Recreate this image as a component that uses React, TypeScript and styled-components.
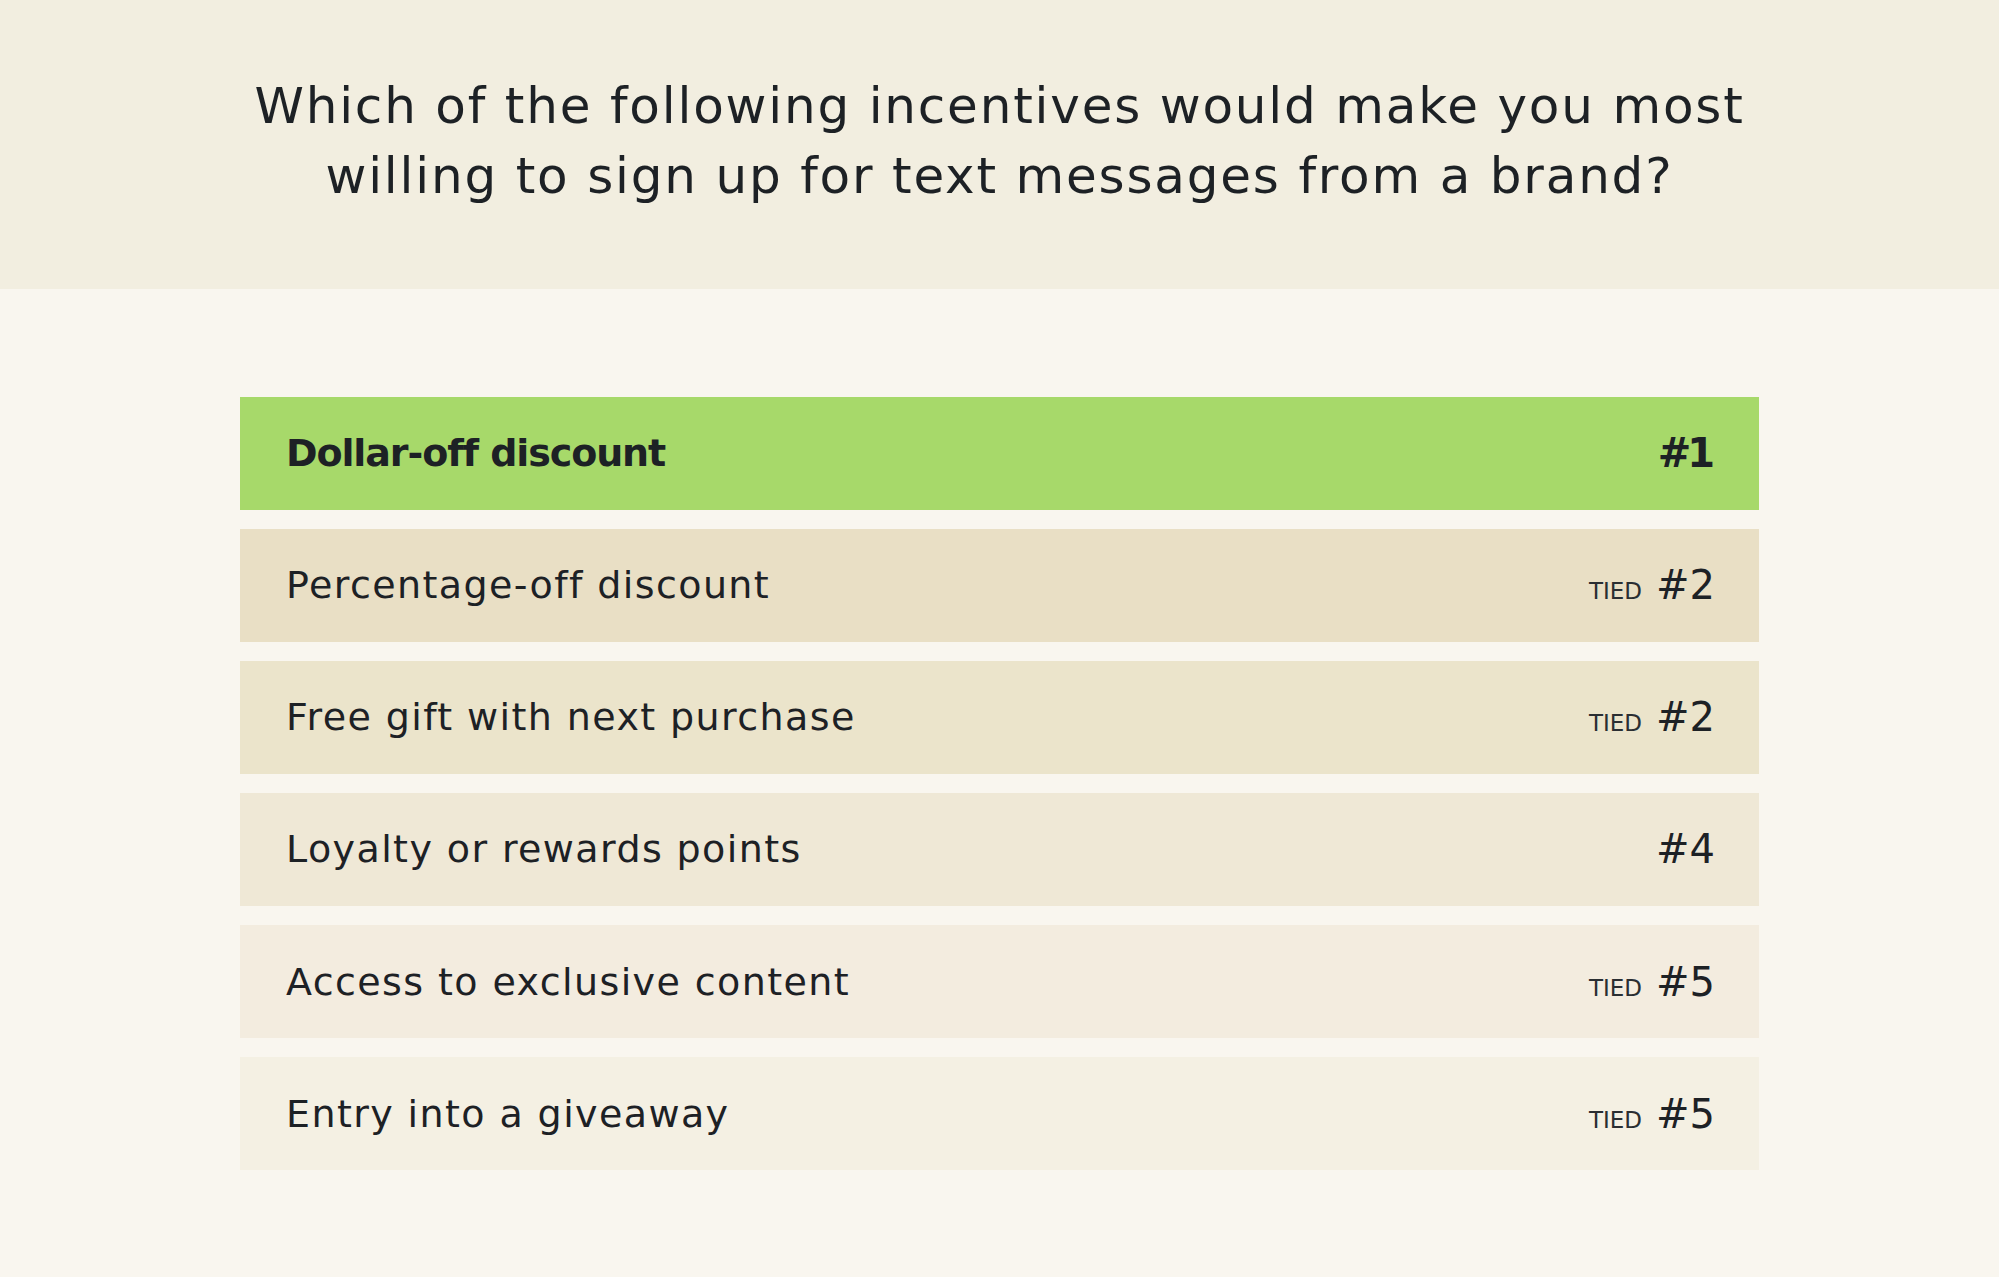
import React from "react";
import styled, { createGlobalStyle } from "styled-components";

const GlobalStyle = createGlobalStyle`
  html, body {
    margin: 0;
    padding: 0;
    background: #f9f6ef;
  }
  body {
    font-family: "DejaVu Sans", "Liberation Sans", sans-serif;
    color: #1d2125;
  }
`;

const Page = styled.main`
  min-height: 1277px;
  background: #f9f6ef;
  display: flex;
  flex-direction: column;
`;

const Header = styled.header`
  height: 289px;
  background: #f2eee0;
  display: flex;
  align-items: center;
  justify-content: center;
  box-sizing: border-box;
  padding-bottom: 8px;
`;

const Question = styled.h1`
  margin: 0;
  font-family: "DejaVu Sans", sans-serif;
  font-weight: 400;
  font-size: 50px;
  line-height: 70px;
  letter-spacing: 1.8px;
  text-align: center;
  color: #1d2125;
  max-width: 1600px;
`;

const List = styled.ol`
  list-style: none;
  margin: 107.5px auto 0;
  padding: 0;
  width: 1519px;
  display: flex;
  flex-direction: column;
  gap: 18.8px;
`;

const Row = styled.li<{ $bg: string }>`
  height: 113.3px;
  background: ${(p) => p.$bg};
  display: flex;
  align-items: center;
  justify-content: space-between;
  padding: 0 44px 0 46px;
  box-sizing: border-box;
`;

const Label = styled.span<{ $bold?: boolean }>`
  font-family: "DejaVu Sans", sans-serif;
  font-size: 38px;
  font-weight: ${(p) => (p.$bold ? 700 : 400)};
  letter-spacing: ${(p) => (p.$bold ? "-1.1px" : "1.4px")};
  color: #1d2125;
`;

const Rank = styled.span`
  display: flex;
  align-items: baseline;
  gap: 14px;
`;

const Tied = styled.span`
  font-family: "DejaVu Sans", sans-serif;
  font-size: 23px;
  color: #2a2e32;
`;

const Number = styled.span<{ $bold?: boolean }>`
  font-family: "DejaVu Sans", sans-serif;
  font-size: 40px;
  font-weight: ${(p) => (p.$bold ? 700 : 400)};
  letter-spacing: ${(p) => (p.$bold ? "-4px" : "0px")};
  margin-right: ${(p) => (p.$bold ? "4px" : "0")};
  color: #1d2125;
`;

const items = [
  { label: "Dollar-off discount", rank: "#1", tied: false, bold: true, bg: "#a7d96a" },
  { label: "Percentage-off discount", rank: "#2", tied: true, bold: false, bg: "#e9dfc5" },
  { label: "Free gift with next purchase", rank: "#2", tied: true, bold: false, bg: "#ebe4cb" },
  { label: "Loyalty or rewards points", rank: "#4", tied: false, bold: false, bg: "#efe8d6" },
  { label: "Access to exclusive content", rank: "#5", tied: true, bold: false, bg: "#f3ecdf" },
  { label: "Entry into a giveaway", rank: "#5", tied: true, bold: false, bg: "#f4f0e3" },
];

export default function App() {
  return (
    <>
      <GlobalStyle />
      <Page>
        <Header>
          <Question>
            Which of the following incentives would make you most
            <br />
            willing to sign up for text messages from a brand?
          </Question>
        </Header>
        <List>
          {items.map((it, i) => (
            <Row key={i} $bg={it.bg}>
              <Label $bold={it.bold}>{it.label}</Label>
              <Rank>
                {it.tied && <Tied>TIED</Tied>}
                <Number $bold={it.bold}>{it.rank}</Number>
              </Rank>
            </Row>
          ))}
        </List>
      </Page>
    </>
  );
}
